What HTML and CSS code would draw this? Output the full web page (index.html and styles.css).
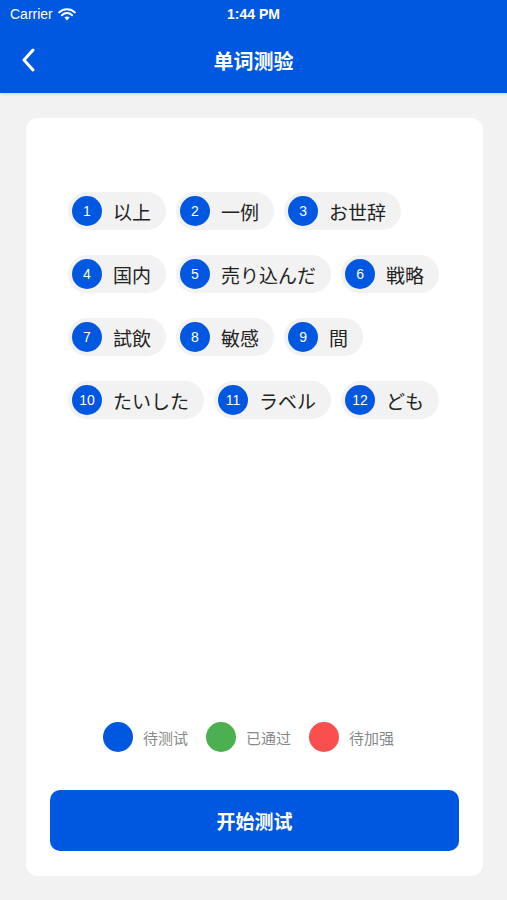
FILE: index.html
```html
<!DOCTYPE html>
<html lang="zh-CN">

<head>
    <meta charset="UTF-8">
    <meta name="viewport" content="width=device-width, initial-scale=1.0">
    <title>单词测验</title>
    <link rel="stylesheet" href="styles.css">
</head>

<body>
    <header class="header">
        <!-- 状态栏 -->
        <div class="status-bar">
            <span class="carrier">Carrier
                <svg class="wifi" width="18" height="13" viewBox="0 0 18 13">
                    <path d="M9 12.5 L6.4 9.6 A3.8 3.8 0 0 1 11.6 9.6 Z" fill="#fff" />
                    <path d="M3.9 7.2 A7.3 7.3 0 0 1 14.1 7.2" stroke="#fff" stroke-width="2" fill="none" stroke-linecap="round" />
                    <path d="M1.2 4.4 A11.2 11.2 0 0 1 16.8 4.4" stroke="#fff" stroke-width="2" fill="none" stroke-linecap="round" />
                </svg>
            </span>
            <span class="time">1:44 PM</span>
        </div>
        <!-- 导航栏 -->
        <div class="nav-bar">
            <svg class="back" width="14" height="24" viewBox="0 0 14 24">
                <path d="M12 2 L3 12 L12 22" stroke="#fff" stroke-width="3" fill="none" stroke-linecap="round" stroke-linejoin="round" />
            </svg>
            <h1 class="title">单词测验</h1>
        </div>
    </header>

    <main class="card">
        <div class="words">
            <div class="chip"><span class="num">1</span><span class="word">以上</span></div>
            <div class="chip"><span class="num">2</span><span class="word">一例</span></div>
            <div class="chip"><span class="num">3</span><span class="word">お世辞</span></div>
            <div class="chip"><span class="num">4</span><span class="word">国内</span></div>
            <div class="chip"><span class="num">5</span><span class="word">売り込んだ</span></div>
            <div class="chip"><span class="num">6</span><span class="word">戦略</span></div>
            <div class="chip"><span class="num">7</span><span class="word">試飲</span></div>
            <div class="chip"><span class="num">8</span><span class="word">敏感</span></div>
            <div class="chip"><span class="num">9</span><span class="word">間</span></div>
            <div class="chip"><span class="num">10</span><span class="word">たいした</span></div>
            <div class="chip"><span class="num">11</span><span class="word">ラベル</span></div>
            <div class="chip"><span class="num">12</span><span class="word">ども</span></div>
        </div>

        <!-- 图例 -->
        <div class="legend">
            <div class="legend-item"><span class="dot blue"></span>待测试</div>
            <div class="legend-item"><span class="dot green"></span>已通过</div>
            <div class="legend-item"><span class="dot red"></span>待加强</div>
        </div>

        <button class="start">开始测试</button>
    </main>
</body>

</html>
```

FILE: styles.css
```css
body {
    margin: 0;
    padding: 0;
    background-color: #f2f2f2;
    font-family: "Noto Sans CJK SC", "Noto Sans", sans-serif;
    color: #222;
}

.header {
    background-color: #0058e1;
    color: white;
    height: 93px;
    box-shadow: 0 1px 3px rgba(0, 0, 0, 0.15);
}

.status-bar {
    position: relative;
    height: 28px;
    display: flex;
    align-items: center;
    padding: 0 10px;
    font-family: "Liberation Sans", Arial, sans-serif;
    font-size: 14px;
}

.carrier {
    display: flex;
    align-items: center;
    gap: 5px;
}

.time {
    position: absolute;
    left: 0;
    right: 0;
    text-align: center;
    font-weight: bold;
}

.nav-bar {
    position: relative;
    height: 65px;
    display: flex;
    align-items: center;
    justify-content: center;
}

.back {
    position: absolute;
    left: 21px;
    top: 20px;
}

.title {
    margin: 0;
    font-size: 20px;
    font-weight: bold;
    margin-top: -1px;
}

.card {
    background-color: white;
    border-radius: 12px;
    margin: 25px 24px 0 26px;
    height: 758px;
    box-sizing: border-box;
    display: flex;
    flex-direction: column;
    padding: 74px 24px 25px 24px;
}

.words {
    display: flex;
    flex-wrap: wrap;
    column-gap: 10px;
    row-gap: 25px;
    padding: 0 4px 0 18px;
}

.chip {
    display: flex;
    align-items: center;
    height: 38px;
    padding: 0 15px 0 4px;
    background-color: #f2f2f2;
    border-radius: 19px;
}

.num {
    width: 30px;
    height: 30px;
    border-radius: 50%;
    background-color: #0058e1;
    color: white;
    font-family: "Liberation Sans", Arial, sans-serif;
    font-size: 14px;
    display: flex;
    align-items: center;
    justify-content: center;
    margin-right: 11px;
}

.word {
    font-family: "Noto Sans CJK JP", sans-serif;
    font-size: 19px;
    line-height: 1;
}

.legend {
    margin-top: auto;
    display: flex;
    justify-content: center;
    gap: 18px;
    margin-bottom: 38px;
    padding-right: 12px;
}

.legend-item {
    display: flex;
    align-items: center;
    gap: 10px;
    font-size: 15px;
    color: #888;
}

.dot {
    width: 30px;
    height: 30px;
    border-radius: 50%;
}

.dot.blue {
    background-color: #0058e1;
}

.dot.green {
    background-color: #4caf50;
}

.dot.red {
    background-color: #fa4f4f;
}

.start {
    height: 61px;
    width: 100%;
    border: none;
    border-radius: 10px;
    background-color: #0058e1;
    color: white;
    font-family: "Noto Sans CJK SC", sans-serif;
    font-size: 19px;
    font-weight: bold;
    cursor: pointer;
}
```
